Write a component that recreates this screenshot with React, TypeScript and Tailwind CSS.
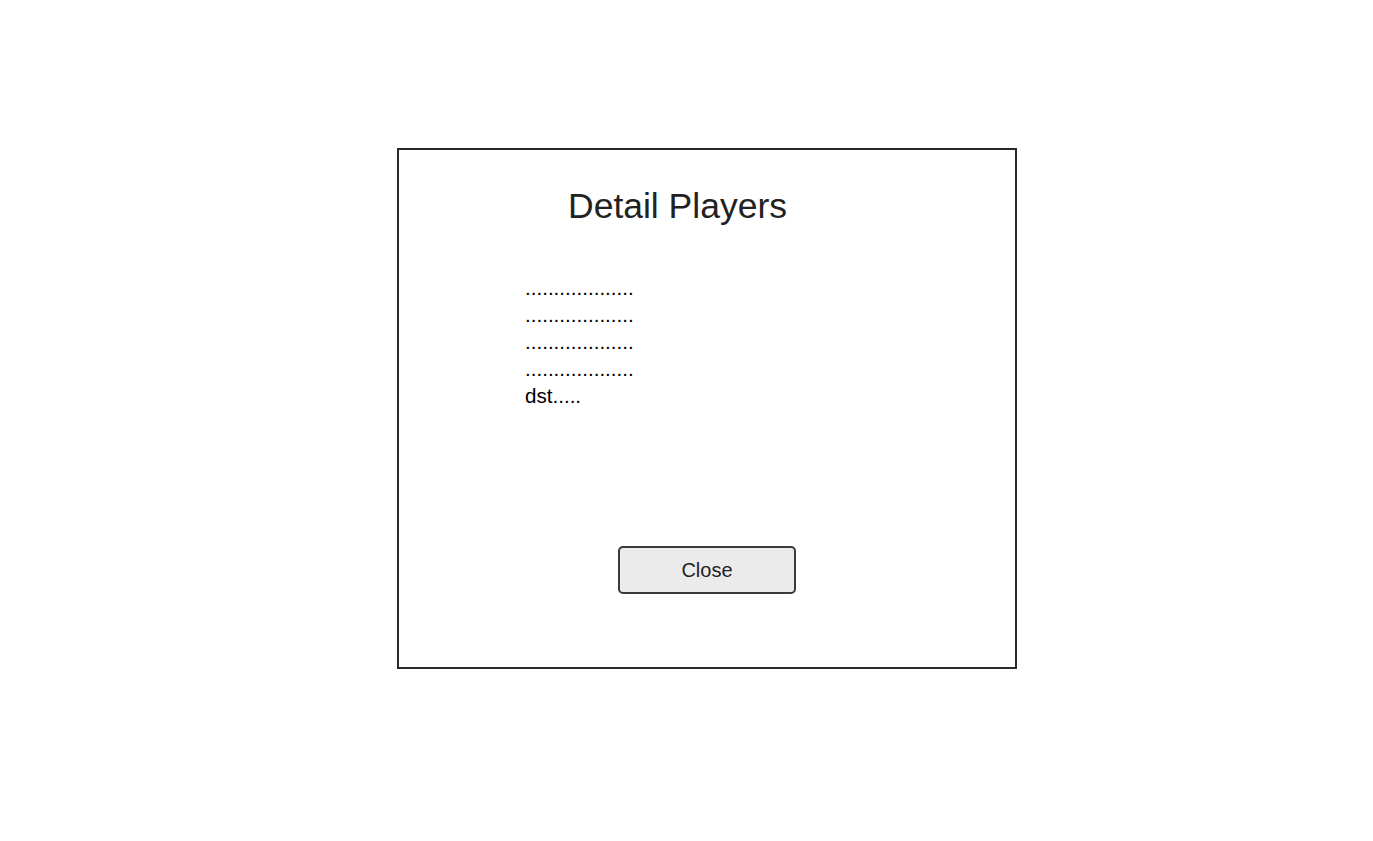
export default function App() {
  return (
    <div className="min-h-[841px] w-full bg-white" style={{ fontFamily: '"Liberation Sans", Arial, sans-serif' }}>
      <div className="pt-[148px] pl-[397px]">
        <div className="flex h-[521px] w-[620px] flex-col border-2 border-[#2a2a2a] bg-white">
          <div className="ml-[169px] mt-[36px] text-[35.5px] leading-[41px] text-[#222222]">Detail Players</div>
          <div className="ml-[126px] mt-[47px] text-[20.6px] leading-[27px] text-black">
            <div>...................</div>
            <div>...................</div>
            <div>...................</div>
            <div>...................</div>
            <div>dst.....</div>
          </div>
          <div className="mt-[137px] flex justify-center">
            <button className="h-[48px] w-[178px] rounded-[5px] border-2 border-[#3a3a3a] bg-[#ebebeb] pb-[1px] text-[20px] text-[#222222]">
              Close
            </button>
          </div>
        </div>
      </div>
    </div>
  );
}
